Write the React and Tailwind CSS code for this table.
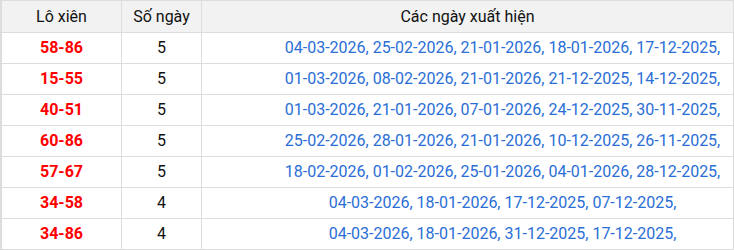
const rows = [
  ["58-86", 5, "04-03-2026, 25-02-2026, 21-01-2026, 18-01-2026, 17-12-2025,"],
  ["15-55", 5, "01-03-2026, 08-02-2026, 21-01-2026, 21-12-2025, 14-12-2025,"],
  ["40-51", 5, "01-03-2026, 21-01-2026, 07-01-2026, 24-12-2025, 30-11-2025,"],
  ["60-86", 5, "25-02-2026, 28-01-2026, 21-01-2026, 10-12-2025, 26-11-2025,"],
  ["57-67", 5, "18-02-2026, 01-02-2026, 25-01-2026, 04-01-2026, 28-12-2025,"],
  ["34-58", 4, "04-03-2026, 18-01-2026, 17-12-2025, 07-12-2025,"],
  ["34-86", 4, "04-03-2026, 18-01-2026, 31-12-2025, 17-12-2025,"],
];

export default function App() {
  return (
    <div
      className="w-[734px] bg-white text-[16px] text-[#111]"
      style={{ fontFamily: "Roboto, 'Liberation Sans', sans-serif" }}
    >
      <div className="grid grid-cols-[120px_80px_532px] border-t border-l-2 border-[#dddddd]">
        <div className="flex h-[32px] items-center justify-center border-r border-b border-[#dddddd] bg-[#f2f2f2]">
          Lô xiên
        </div>
        <div className="flex h-[32px] items-center justify-center border-r border-b border-[#dddddd] bg-[#f2f2f2]">
          Số ngày
        </div>
        <div className="flex h-[32px] items-center justify-center border-r border-b border-[#dddddd] bg-[#f2f2f2]">
          Các ngày xuất hiện
        </div>
        {rows.map(([cap, soNgay, ngay]) => (
          <div key={cap} className="contents">
            <div className="flex h-[31px] items-center justify-center border-r border-b border-[#dddddd] font-bold text-[#ff0000]">
              {cap}
            </div>
            <div className="flex h-[31px] items-center justify-center border-r border-b border-[#dddddd]">
              {soNgay}
            </div>
            <div className="flex h-[31px] items-center justify-center border-r border-b border-[#dddddd] pl-[70px] text-[#2a6ed6] whitespace-nowrap">
              {ngay}
            </div>
          </div>
        ))}
      </div>
    </div>
  );
}
